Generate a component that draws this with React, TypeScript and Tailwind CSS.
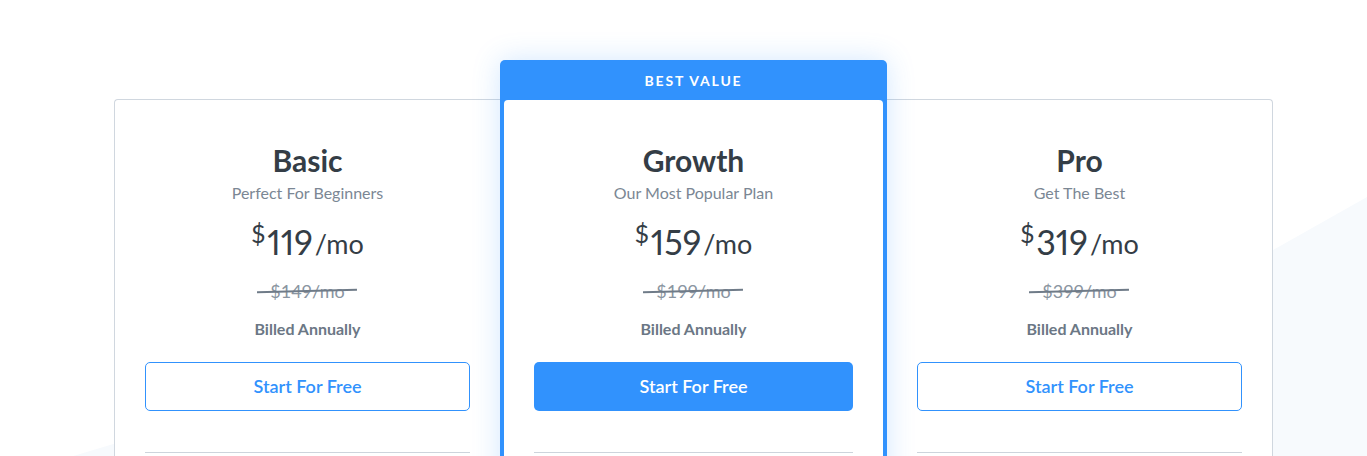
import React from 'react';

interface Plan {
    name: string;
    tagline: string;
    price: string;
    oldPrice: string;
    featured?: boolean;
}

const plans: Plan[] = [
    { name: 'Basic', tagline: 'Perfect For Beginners', price: '119', oldPrice: '$149/mo' },
    { name: 'Growth', tagline: 'Our Most Popular Plan', price: '159', oldPrice: '$199/mo', featured: true },
    { name: 'Pro', tagline: 'Get The Best', price: '319', oldPrice: '$399/mo' },
];

const PlanBody: React.FC<{ plan: Plan }> = ({ plan }) => (
    <div className="flex flex-col items-center px-[30px] pt-[43px]">
        <h2 className="text-[30px] leading-[34px] font-bold text-[#343d46]">{plan.name}</h2>
        <p className="mt-[6px] text-[16px] leading-[20px] text-[#7b8794]">{plan.tagline}</p>
        <div className="mt-[19px] flex items-start h-[40px] text-[#343d46] proportional-nums">
            <span className="text-[25px] leading-[28px] mt-[-3px] mr-[2px]">$</span>
            <span className="text-[34px] leading-[40px]">{plan.price}</span>
            <span className="text-[27px] leading-[40px] ml-[2px] mt-[2px]">/mo</span>
        </div>
        <div className="mt-[17px] relative h-[24px] flex items-center">
            <span className="text-[18px] leading-[24px] text-[#8a95a1]">{plan.oldPrice}</span>
            <span className="absolute left-[-13px] right-[-13px] top-[11px] h-[2px] bg-[#6f7b88] -rotate-[1.5deg]" />
        </div>
        <p className="mt-[16px] text-[16px] leading-[20px] font-bold text-[#6b7785]">Billed Annually</p>
        <button
            className={
                plan.featured
                    ? 'mt-[23px] w-full h-[49px] rounded-[5px] bg-[#3192fd] text-white text-[18px] font-semibold'
                    : 'mt-[23px] w-full h-[49px] rounded-[5px] border border-[#3192fd] bg-white text-[#3192fd] text-[18px] font-semibold'
            }
        >
            Start For Free
        </button>
        <div className="mt-[41px] w-full h-px bg-[#cdd4dc]" />
    </div>
);

export default function App() {
    return (
        <div className="relative h-[456px] w-full overflow-hidden bg-white" style={{ fontFamily: 'Lato, "Open Sans", sans-serif' }}>
            <svg className="absolute inset-0 w-full h-full" viewBox="0 0 1367 456" preserveAspectRatio="none">
                <polygon points="1367,197 900,460 1367,460" fill="#f7fafd" />
                <polygon points="60,460 140,436 300,460" fill="#f7fafd" />
            </svg>
            <div className="relative flex items-start pl-[114px] pt-[60px]">
                <div className="w-[386px] h-[420px] mt-[39px] bg-white border-l border-t border-[#d0d7df] rounded-tl-[4px]">
                    <PlanBody plan={plans[0]} />
                </div>
                <div className="w-[387px] h-[460px] bg-[#3192fd] rounded-t-[5px] px-[4px] shadow-[0_0_28px_rgba(49,146,253,0.22)] relative z-10">
                    <div className="h-[40px] flex items-center justify-center text-white text-[14px] font-bold tracking-[1.8px]">
                        BEST VALUE
                    </div>
                    <div className="bg-white h-full rounded-t-[4px]">
                        <PlanBody plan={plans[1]} />
                    </div>
                </div>
                <div className="w-[386px] h-[420px] mt-[39px] bg-white border-r border-t border-[#d0d7df] rounded-tr-[4px]">
                    <PlanBody plan={plans[2]} />
                </div>
            </div>
        </div>
    );
}
